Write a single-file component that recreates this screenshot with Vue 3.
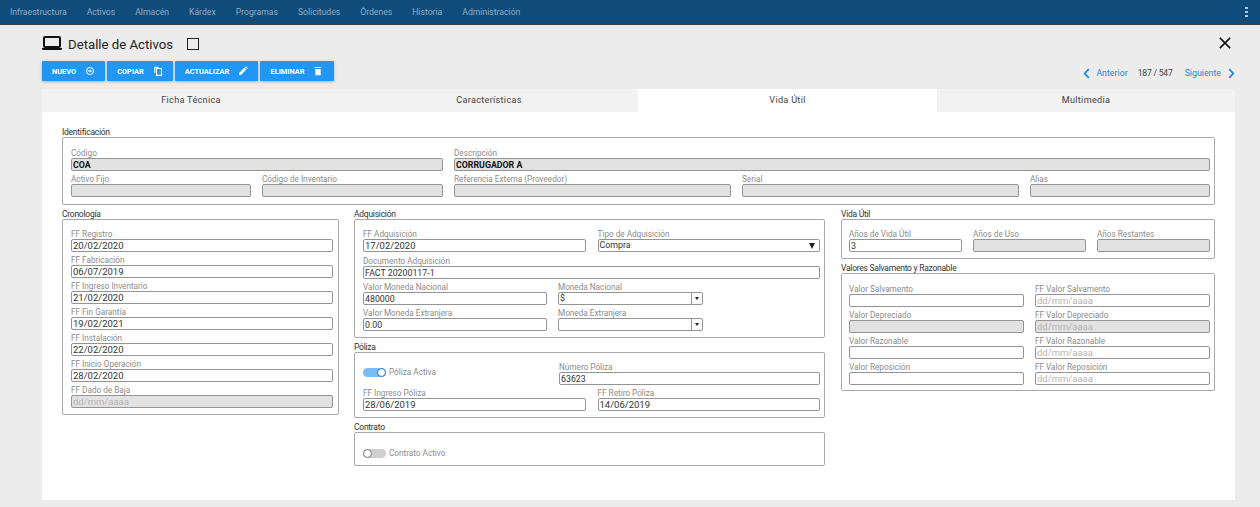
<script setup>
const menu = ['Infraestructura', 'Activos', 'Almacén', 'Kárdex', 'Programas', 'Solicitudes', 'Órdenes', 'Historia', 'Administración']
const tabs = ['Ficha Técnica', 'Características', 'Vida Útil', 'Multimedia']

const cronologia = [
  { label: 'FF Registro', value: '20/02/2020' },
  { label: 'FF Fabricación', value: '06/07/2019' },
  { label: 'FF Ingreso Inventario', value: '21/02/2020' },
  { label: 'FF Fin Garantía', value: '19/02/2021' },
  { label: 'FF Instalación', value: '22/02/2020' },
  { label: 'FF Inicio Operación', value: '28/02/2020' },
  { label: 'FF Dado de Baja', value: '', disabled: true }
]

const valores = [
  { label: 'Valor Salvamento', date: 'FF Valor Salvamento' },
  { label: 'Valor Depreciado', date: 'FF Valor Depreciado', disabled: true },
  { label: 'Valor Razonable', date: 'FF Valor Razonable' },
  { label: 'Valor Reposición', date: 'FF Valor Reposición' }
]
</script>

<template>
  <div class="page">
    <nav class="topbar">
      <a v-for="item in menu" :key="item" class="menu-item">{{ item }}</a>
      <span class="kebab"><i></i><i></i><i></i></span>
    </nav>

    <div class="content">
      <header class="title-row">
        <svg class="laptop" viewBox="0 0 20 14" width="20" height="14">
          <rect x="2" y="1" width="16" height="10" rx="1" fill="none" stroke="#111" stroke-width="2" />
          <path d="M0 12h20v0.8a1.2 1.2 0 0 1-1.2 1.2H1.2A1.2 1.2 0 0 1 0 12.8z" fill="#111" />
        </svg>
        <h1>Detalle de Activos</h1>
        <span class="square"></span>
        <svg class="close" viewBox="0 0 14 14" width="12" height="12">
          <path d="M1 1l12 12M13 1L1 13" stroke="#111" stroke-width="1.8" fill="none" />
        </svg>
      </header>

      <div class="toolbar">
        <div class="actions">
          <button class="btn btn-nuevo">
            NUEVO
            <svg viewBox="0 0 12 12" width="10" height="10">
              <circle cx="6" cy="6" r="4.3" fill="none" stroke="#fff" stroke-width="1.2" />
              <path d="M3.2 6h5.6M6 4.4v3.2" stroke="#fff" stroke-width="1.1" />
            </svg>
          </button>
          <button class="btn btn-copiar">
            COPIAR
            <svg viewBox="0 0 12 12" width="10" height="10">
              <path d="M1.5 0.8h5.5v1.3H2.8v6.4H1.5z" fill="#fff" />
              <path d="M4.2 3h6v8.2h-6z" fill="none" stroke="#fff" stroke-width="1.3" />
            </svg>
          </button>
          <button class="btn btn-actualizar">
            ACTUALIZAR
            <svg viewBox="0 0 12 12" width="10" height="10">
              <path d="M1 11l.6-2.8 6-6 2.2 2.2-6 6zM8.4 1.4l1-1 2.2 2.2-1 1z" fill="#fff" />
            </svg>
          </button>
          <button class="btn btn-eliminar">
            ELIMINAR
            <svg viewBox="0 0 12 12" width="10" height="10">
              <path d="M2 1.2h8v1.2H2zM2.8 3.6h6.4V11H2.8z" fill="#fff" />
            </svg>
          </button>
        </div>

        <div class="pager">
          <svg viewBox="0 0 8 12" width="7" height="11">
            <path d="M6.6 1L2 6l4.6 5" fill="none" stroke="#1e88e5" stroke-width="2" />
          </svg>
          <a class="pager-link prev">Anterior</a>
          <span class="pager-count">187 / 547</span>
          <a class="pager-link next">Siguiente</a>
          <svg viewBox="0 0 8 12" width="7" height="11">
            <path d="M1.4 1L6 6l-4.6 5" fill="none" stroke="#1e88e5" stroke-width="2" />
          </svg>
        </div>
      </div>

      <div class="card">
        <div class="tabs">
          <div v-for="tab in tabs" :key="tab" class="tab" :class="{ active: tab === 'Vida Útil' }">{{ tab }}</div>
        </div>

        <div class="panel">
          <section class="section">
            <div class="legend">Identificación</div>
            <div class="box ident">
              <div class="field span-2">
                <label>Código</label>
                <input class="strong" value="COA" disabled />
              </div>
              <div class="field span-3">
                <label>Descripción</label>
                <input class="strong" value="CORRUGADOR A" disabled />
              </div>
              <div class="field"><label>Activo Fijo</label><input disabled /></div>
              <div class="field"><label>Código de Inventario</label><input disabled /></div>
              <div class="field"><label>Referencia Externa (Proveedor)</label><input disabled /></div>
              <div class="field"><label>Serial</label><input disabled /></div>
              <div class="field"><label>Alias</label><input disabled /></div>
            </div>
          </section>

          <div class="columns">
            <div class="column">
              <section class="section">
                <div class="legend">Cronología</div>
                <div class="box">
                  <div v-for="row in cronologia" :key="row.label" class="field">
                    <label>{{ row.label }}</label>
                    <input class="date" :value="row.value" :disabled="row.disabled" :placeholder="row.disabled ? 'dd/mm/aaaa' : ''" />
                  </div>
                </div>
              </section>
            </div>

            <div class="column">
              <section class="section">
                <div class="legend">Adquisición</div>
                <div class="box adq">
                  <div class="split">
                    <div class="field"><label>FF Adquisición</label><input class="date" value="17/02/2020" /></div>
                    <div class="field">
                      <label>Tipo de Adquisición</label>
                      <div class="select plain">Compra<span class="arrow big"></span></div>
                    </div>
                  </div>
                  <div class="field doc"><label>Documento Adquisición</label><input value="FACT 20200117-1" /></div>
                  <div class="money">
                    <div class="field"><label>Valor Moneda Nacional</label><input value="480000" /></div>
                    <div class="field">
                      <label>Moneda Nacional</label>
                      <div class="select">$<span class="drop"><span class="arrow"></span></span></div>
                    </div>
                  </div>
                  <div class="money">
                    <div class="field"><label>Valor Moneda Extranjera</label><input value="0.00" /></div>
                    <div class="field">
                      <label>Moneda Extranjera</label>
                      <div class="select"><span class="drop"><span class="arrow"></span></span></div>
                    </div>
                  </div>
                </div>
              </section>

              <section class="section">
                <div class="legend">Póliza</div>
                <div class="box poliza">
                  <div class="poliza-top">
                    <div class="switch-row">
                      <span class="switch on"></span>
                      <span>Póliza Activa</span>
                    </div>
                    <div class="field"><label>Número Póliza</label><input value="63623" /></div>
                  </div>
                  <div class="split">
                    <div class="field"><label>FF Ingreso Póliza</label><input class="date" value="28/06/2019" /></div>
                    <div class="field"><label>FF Retiro Póliza</label><input class="date" value="14/06/2019" /></div>
                  </div>
                </div>
              </section>

              <section class="section">
                <div class="legend">Contrato</div>
                <div class="box contrato">
                  <div class="switch-row">
                    <span class="switch"></span>
                    <span>Contrato Activo</span>
                  </div>
                </div>
              </section>
            </div>

            <div class="column last">
              <section class="section">
                <div class="legend">Vida Útil</div>
                <div class="box vida">
                  <div class="field"><label>Años de Vida Útil</label><input value="3" /></div>
                  <div class="field"><label>Años de Uso</label><input disabled /></div>
                  <div class="field"><label>Años Restantes</label><input disabled /></div>
                </div>
              </section>

              <section class="section">
                <div class="legend">Valores Salvamento y Razonable</div>
                <div class="box valores">
                  <template v-for="row in valores" :key="row.label">
                    <div class="field">
                      <label>{{ row.label }}</label>
                      <input :disabled="row.disabled" />
                    </div>
                    <div class="field">
                      <label>{{ row.date }}</label>
                      <input class="date" :disabled="row.disabled" placeholder="dd/mm/aaaa" />
                    </div>
                  </template>
                </div>
              </section>
            </div>
          </div>
        </div>
      </div>
    </div>
  </div>
</template>

<style>
html,
body {
  margin: 0;
  background: #ececec;
  overflow: hidden;
}
</style>

<style scoped>
.page {
  height: 507px;
  background: #ececec;
  font-family: Roboto, "Liberation Sans", sans-serif;
  color: #333;
}

.topbar {
  height: 23px;
  display: flex;
  align-items: center;
  gap: 20px;
  padding: 0 10px;
  background: #0f4c7c;
  border-bottom: 2px solid #3f3f3f;
}

.menu-item {
  font-size: 8.65px;
  color: #93abc0;
}

.kebab {
  margin-left: auto;
  margin-right: 2px;
  display: flex;
  flex-direction: column;
  gap: 2px;
}

.kebab i {
  width: 3px;
  height: 2px;
  background: #b4c4d2;
}

.content {
  padding: 0 25px 0 42px;
}

.title-row {
  height: 36px;
  display: flex;
  align-items: center;
}

.title-row h1 {
  margin: 2px 0 0 6px;
  font-size: 13.2px;
  font-weight: 400;
  color: #222;
}

.square {
  width: 10px;
  height: 10px;
  margin: 2px 0 0 14px;
  border: 1px solid #222;
}

.close {
  margin: 0 4px 0 auto;
}

.toolbar {
  height: 28px;
  display: flex;
  justify-content: space-between;
  align-items: flex-start;
}

.actions {
  display: flex;
  gap: 2px;
}

.btn {
  height: 20px;
  padding: 0;
  display: flex;
  align-items: center;
  justify-content: center;
  gap: 9px;
  border: none;
  border-radius: 1px;
  background: #2196f3;
  color: #fff;
  font-family: inherit;
  font-size: 7.4px;
  font-weight: 700;
  box-shadow: 0 1px 3px rgba(0, 0, 0, 0.25);
}

.btn-nuevo { width: 63px; }
.btn-copiar { width: 66px; }
.btn-actualizar { width: 83px; }
.btn-eliminar { width: 74px; }

.pager {
  height: 24px;
  display: flex;
  align-items: center;
  font-size: 8.8px;
}

.pager-link {
  color: #1e88e5;
}

.prev { margin-left: 6px; }
.next { margin-right: 7px; }

.pager-count {
  margin: 0 12px 1px 10px;
  font-size: 8.6px;
  letter-spacing: -0.2px;
  color: #444;
}

.card {
  width: 1193px;
}

.tabs {
  display: grid;
  grid-template-columns: 298px 298px 299px 298px;
  background: #f2f2f2;
}

.tab {
  height: 23px;
  line-height: 23px;
  text-align: center;
  font-size: 9.1px;
  letter-spacing: 0.3px;
  color: #444;
}

.tab.active {
  background: #fff;
}

.panel {
  height: 388px;
  box-sizing: border-box;
  padding: 15px 20px 0;
  background: #fff;
}

.section + .section {
  margin-top: 4px;
}

.legend {
  height: 10px;
  line-height: 11px;
  font-size: 8.5px;
  letter-spacing: -0.25px;
  color: #333;
}

.box {
  border: 1px solid #a8a8a8;
  border-radius: 2px;
  padding: 6px 5px 6px 8px;
}

.ident {
  display: grid;
  grid-template-columns: 180px 181px 277px 277px 180px;
  column-gap: 11px;
  padding-top: 7px;
  padding-bottom: 7px;
}

.span-2 { grid-column: span 2; }
.span-3 { grid-column: span 3; }

.columns {
  margin-top: 4px;
  display: grid;
  grid-template-columns: 277px 471px 375px;
  column-gap: 15px;
}

.column {
  min-width: 0;
}

.column.last {
  padding-left: 1px;
}

.field {
  min-width: 0;
  display: flex;
  flex-direction: column;
}

.field label {
  height: 13px;
  line-height: 16px;
  font-size: 8.2px;
  color: #8c8c8c;
  white-space: nowrap;
}

.field input,
.select {
  width: 100%;
  height: 13px;
  box-sizing: border-box;
  margin: 0;
  padding: 0 1px;
  border: 1px solid #949494;
  border-radius: 2px;
  outline: none;
  background: #fff;
  font-family: inherit;
  font-size: 8.8px;
  line-height: 11px;
  color: #333;
}

.field input.date {
  font-size: 9.5px;
}

.field input:disabled {
  background: #e2e2e2;
  color: #333;
}

.field input::placeholder {
  color: #b5b5b5;
}

.field input.strong {
  font-weight: 700;
  color: #111;
}

.adq {
  padding-right: 4px;
}

.doc {
  margin-top: 1px;
}

.split {
  display: grid;
  grid-template-columns: 1fr 1fr;
  column-gap: 12px;
}

.money {
  display: grid;
  grid-template-columns: 184px 145px;
  column-gap: 11px;
}

.select {
  position: relative;
}

.drop {
  position: absolute;
  top: 0;
  right: 0;
  bottom: 0;
  width: 10px;
  display: flex;
  align-items: center;
  justify-content: center;
  border-left: 1px solid #949494;
}

.arrow {
  width: 0;
  height: 0;
  border-left: 2.5px solid transparent;
  border-right: 2.5px solid transparent;
  border-top: 3px solid #222;
}

.arrow.big {
  position: absolute;
  top: 3px;
  right: 4px;
  border-left-width: 3.5px;
  border-right-width: 3.5px;
  border-top-width: 6px;
}

.poliza {
  padding-right: 4px;
}

.poliza-top {
  display: grid;
  grid-template-columns: 196px 1fr;
}

.switch-row {
  display: flex;
  align-items: center;
  gap: 3px;
  font-size: 8.2px;
  color: #8c8c8c;
}

.switch {
  position: relative;
  width: 23px;
  height: 9px;
  border-radius: 5px;
  background: #cfcfcf;
}

.switch::after {
  content: "";
  position: absolute;
  top: 0;
  left: 0;
  width: 9px;
  height: 9px;
  box-sizing: border-box;
  border: 1px solid #777;
  border-radius: 50%;
  background: #fff;
}

.switch.on {
  background: #79bdf2;
}

.switch.on::after {
  left: auto;
  right: 0;
  border-color: #1976d2;
}

.contrato {
  height: 34px;
  box-sizing: border-box;
  padding-top: 15px;
}

.vida {
  display: grid;
  grid-template-columns: 113px 113px 113px;
  column-gap: 11px;
  padding-left: 7px;
}

.valores {
  display: grid;
  grid-template-columns: 175px 175px;
  column-gap: 11px;
  padding-top: 7px;
  padding-bottom: 5px;
  padding-left: 7px;
}
</style>
